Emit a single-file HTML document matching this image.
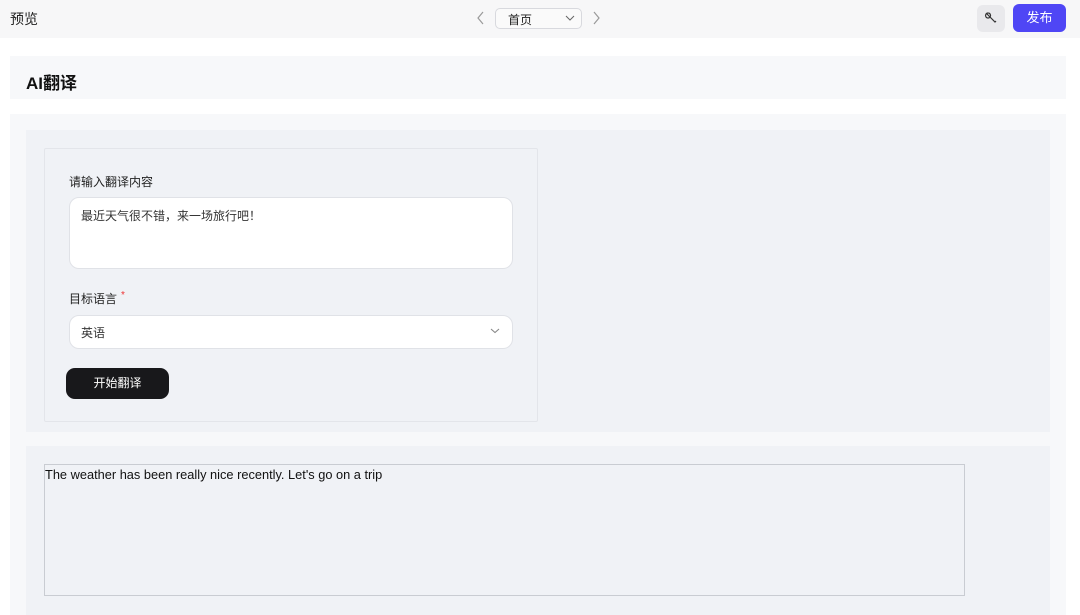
<!DOCTYPE html>
<html><head><meta charset="utf-8"><style>
*{margin:0;padding:0;box-sizing:border-box}
body{width:1080px;height:615px;overflow:hidden;background:#fff;font-family:"Liberation Sans","Noto Sans CJK SC",sans-serif;color:#1d1d1f;position:relative}
.abs{position:absolute}
</style></head><body>
<div class="abs" style="left:0;top:0;width:1080px;height:38px;background:#f7f7f8"></div>
<div class="abs" style="left:10px;top:9px;font-size:14px;color:#222">预览</div>
<svg class="abs" style="left:476px;top:11px" width="10" height="14"><path d="M7 1 L2 7 L7 13" fill="none" stroke="#999" stroke-width="1.2"/></svg>
<div class="abs" style="left:495px;top:8px;width:87px;height:21px;border:1px solid #d8d9de;border-radius:5px;background:#fafafa;font-size:12px;padding:2px 0 0 12px;color:#222">首页</div>
<svg class="abs" style="left:565px;top:14px" width="10" height="8"><path d="M1 2 L5 6 L9 2" fill="none" stroke="#666" stroke-width="1"/></svg>
<svg class="abs" style="left:591px;top:11px" width="10" height="14"><path d="M3 1 L8 7 L3 13" fill="none" stroke="#999" stroke-width="1.2"/></svg>
<div class="abs" style="left:977px;top:5px;width:28px;height:27px;background:#e9e9ec;border-radius:6px"></div>
<svg class="abs" style="left:984px;top:11px" width="14" height="14"><path d="M3 3 L6 6 M4 2 a2.5 2.5 0 1 0 0.1 0 M6 6 L11 11 L12 10" fill="none" stroke="#333" stroke-width="1.2"/></svg>
<div class="abs" style="left:1013px;top:4px;width:53px;height:28px;background:#4f46f5;border-radius:6px;color:#fff;font-size:13px;text-align:center;line-height:28px">发布</div>

<div class="abs" style="left:10px;top:56px;width:1056px;height:43px;background:#f7f8fa"></div>
<div class="abs" style="left:26px;top:74px;font-size:17px;font-weight:bold;color:#111;line-height:20px">AI翻译</div>

<div class="abs" style="left:10px;top:114px;width:1056px;height:501px;background:#f7f8fa"></div>
<div class="abs" style="left:26px;top:130px;width:1024px;height:302px;background:#f0f2f6"></div>
<div class="abs" style="left:44px;top:148px;width:494px;height:274px;border:1px solid #e3e5ea;border-radius:2px"></div>
<div class="abs" style="left:69px;top:173px;font-size:12px;color:#222">请输入翻译内容</div>
<div class="abs" style="left:69px;top:197px;width:444px;height:72px;background:#fff;border:1px solid #e0e2e7;border-radius:10px;font-size:12px;padding:9px 0 0 11px;color:#333">最近天气很不错，来一场旅行吧！</div>
<div class="abs" style="left:69px;top:290px;font-size:12px;color:#222">目标语言<span style="color:#e33;font-size:10px;position:relative;top:-5px;margin-left:4px">*</span></div>
<div class="abs" style="left:69px;top:315px;width:444px;height:34px;background:#fff;border:1px solid #e0e2e7;border-radius:10px;font-size:12px;padding:8px 0 0 11px;color:#333">英语</div>
<svg class="abs" style="left:489px;top:327px" width="12" height="8"><path d="M2 2 L6 5.5 L10 2" fill="none" stroke="#888" stroke-width="1.1"/></svg>
<div class="abs" style="left:66px;top:368px;width:103px;height:31px;background:#18181b;border-radius:9px;color:#fff;font-size:12px;text-align:center;line-height:31px">开始翻译</div>

<div class="abs" style="left:26px;top:446px;width:1024px;height:169px;background:#f0f2f6"></div>
<div class="abs" style="left:44px;top:464px;width:921px;height:132px;border:1px solid #c9ccd2;font-size:12.8px;padding:2px 0 0 0;color:#111">The weather has been really nice recently. Let's go on a trip</div>
</body></html>
